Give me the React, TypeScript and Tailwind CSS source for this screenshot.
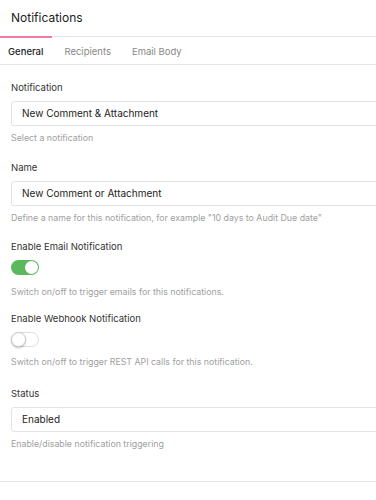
import React from "react";

function Field({ label, value, help, className = "" }: { label: string; value: string; help: string; className?: string }) {
  return (
    <div className={"flex flex-col " + className}>
      <div className="text-[9.5px] leading-[14px] text-[#333]">{label}</div>
      <div className="mt-[6px] h-[25px] w-[420px] rounded-[3px] border border-[#e3e3e3] flex items-center pl-[10px] text-[10px] text-[#222]">
        {value}
      </div>
      <div className="mt-[6px] text-[8.8px] leading-[12px] text-[#a0a0a0]">{help}</div>
    </div>
  );
}

function Toggle({ on }: { on: boolean }) {
  return on ? (
    <div className="w-[28px] h-[15px] rounded-full bg-[#5cb85c] relative">
      <div className="absolute right-[1px] top-[1px] w-[13px] h-[13px] rounded-full bg-white" />
    </div>
  ) : (
    <div className="w-[28px] h-[15px] rounded-full bg-white border border-[#ddd] relative">
      <div className="absolute left-[-1px] top-[-1px] w-[15px] h-[15px] rounded-full bg-white border border-[#ccc] shadow-[0_1px_2px_rgba(0,0,0,0.25)]" />
    </div>
  );
}

function ToggleField({ label, on, help, className = "", helpClass = "mt-[11px]" }: { label: string; on: boolean; help: string; className?: string; helpClass?: string }) {
  return (
    <div className={"flex flex-col " + className}>
      <div className="text-[9.5px] leading-[14px] text-[#333]">{label}</div>
      <div className="mt-[6px]">
        <Toggle on={on} />
      </div>
      <div className={"text-[8.8px] leading-[12px] text-[#a0a0a0] " + helpClass}>{help}</div>
    </div>
  );
}

export default function App() {
  return (
    <div className="w-[376px] h-[500px] overflow-hidden bg-white" style={{ fontFamily: "Inter, 'Noto Sans', sans-serif" }}>
      <div className="h-[36px] flex items-center pl-[11px] text-[12px] text-[#222]">Notifications</div>
      <div className="h-[29px] pt-[3px] border-t border-b border-[#e5e5e5] flex text-[9.5px] relative">
        <div className="absolute left-0 top-[-1px] w-[52px] h-[2px] bg-[#f27aa5]" />
        <div className="pl-[8px] flex items-center text-[#222] font-medium">General</div>
        <div className="pl-[21px] flex items-center text-[#888]">Recipients</div>
        <div className="pl-[21px] flex items-center text-[#888]">Email Body</div>
      </div>
      <div className="pl-[11px] pt-[16px] flex flex-col">
        <Field label="Notification" value="New Comment & Attachment" help="Select a notification" />
        <Field className="mt-[17px]" label="Name" value="New Comment or Attachment" help={'Define a name for this notification, for example "10 days to Audit Due date"'} />
        <ToggleField className="mt-[16px]" label="Enable Email Notification" on={true} help="Switch on/off to trigger emails for this notifications." />
        <ToggleField className="mt-[14px]" helpClass="mt-[9px]" label="Enable Webhook Notification" on={false} help="Switch on/off to trigger REST API calls for this notification." />
        <Field className="mt-[19px]" label="Status" value="Enabled" help="Enable/disable notification triggering" />
      </div>
      <div className="mt-[31px] border-t border-[#e5e5e5]" />
    </div>
  );
}
